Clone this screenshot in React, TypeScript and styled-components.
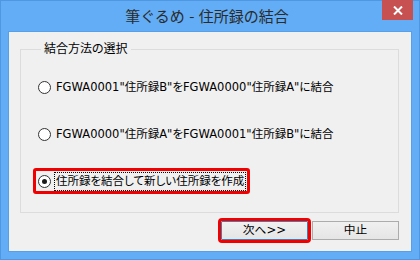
import React, { useState } from 'react';
import styled, { createGlobalStyle, css } from 'styled-components';

// Meiryo UI stand-in: Verdana-like Latin from DejaVu, kana/kanji from Noto CJK
const uiFont = `'DejaVu Sans', 'Noto Sans CJK JP', sans-serif`;

const GlobalStyle = createGlobalStyle`
  html, body {
    margin: 0;
    padding: 0;
    background: #62adf5;
  }
  body {
    font-family: ${uiFont};
    font-feature-settings: 'palt';
  }
`;

const options = [
  { id: 'b-to-a', label: 'FGWA0001"住所録B"をFGWA0000"住所録A"に結合' },
  { id: 'a-to-b', label: 'FGWA0000"住所録A"をFGWA0001"住所録B"に結合' },
  { id: 'new', label: '住所録を結合して新しい住所録を作成' },
];

const App: React.FC = () => {
  const [selected, setSelected] = useState('new');

  return (
    <>
      <GlobalStyle />
      <Window>
        <TitleBar>
          <span />
          <Title>筆ぐるめ - 住所録の結合</Title>
          <CloseButton aria-label="閉じる">
            <svg width="10" height="9" viewBox="0 0 10 9">
              <path d="M1 0.5 L9 8.5 M9 0.5 L1 8.5" stroke="#fff" strokeWidth="2" />
            </svg>
          </CloseButton>
        </TitleBar>
        <Client>
          <GroupBox>
            <Legend>結合方法の選択</Legend>
            <OptionList>
              {options.map((opt) => (
                <OptionRow
                  key={opt.id}
                  $highlighted={opt.id === 'new'}
                  onClick={() => setSelected(opt.id)}
                >
                  <RadioCircle $checked={selected === opt.id} />
                  <OptionText $focused={selected === opt.id}>{opt.label}</OptionText>
                </OptionRow>
              ))}
            </OptionList>
          </GroupBox>
          <ButtonRow>
            <DialogButton $primary $highlighted>次へ&gt;&gt;</DialogButton>
            <DialogButton>中止</DialogButton>
          </ButtonRow>
        </Client>
      </Window>
    </>
  );
};

const Window = styled.div`
  width: 420px;
  height: 260px;
  box-sizing: border-box;
  border: 1px solid #4f97e0;
  background: #62adf5;
  display: flex;
  flex-direction: column;
`;

const TitleBar = styled.div`
  height: 30px;
  display: grid;
  grid-template-columns: 1fr max-content 1fr;
  align-items: start;
  padding-right: 6px;
`;

const Title = styled.div`
  font-family: 'Noto Sans CJK JP', sans-serif;
  font-feature-settings: normal;
  font-size: 15px;
  line-height: 30px;
  color: #2b2b2b;
  white-space: nowrap;
  word-spacing: 1px;
`;

const CloseButton = styled.button`
  justify-self: end;
  width: 31px;
  height: 20px;
  margin-top: -1px;
  border: none;
  padding: 0;
  background: #c75050;
  display: flex;
  align-items: center;
  justify-content: center;
`;

const Client = styled.div`
  flex: 1;
  margin: 0 7px 7px 7px;
  border: 1px solid #56a0ea;
  background: #f0f0f0;
  display: flex;
  flex-direction: column;
  padding: 10px 12px 0 11px;
`;

const GroupBox = styled.fieldset`
  margin: 0;
  padding: 18px 0 0 15px;
  height: 171px;
  box-sizing: border-box;
  border: 1px solid #dcdcdc;
  border-radius: 0;
`;

const Legend = styled.legend`
  padding: 0 3px;
  margin-left: 5px;
  font-size: 12px;
  line-height: 14px;
  color: #000;
`;

const OptionList = styled.div`
  display: flex;
  flex-direction: column;
  gap: 21px;
`;

const OptionRow = styled.div<{ $highlighted?: boolean }>`
  display: flex;
  align-items: center;
  gap: 4px;
  height: 26px;
  box-sizing: border-box;
  padding-left: 2px;
  width: fit-content;
  border: 3px solid transparent;
  border-radius: 3px;
  margin-left: -3px;
  cursor: default;
  ${({ $highlighted }) =>
    $highlighted &&
    css`
      border-color: #f00000;
      padding-right: 2px;
    `}
`;

const RadioCircle = styled.span<{ $checked: boolean }>`
  width: 13px;
  height: 13px;
  box-sizing: border-box;
  border-radius: 50%;
  border: 1px solid #333;
  background: #fff;
  display: flex;
  align-items: center;
  justify-content: center;
  flex-shrink: 0;
  &::after {
    content: '';
    width: 5px;
    height: 5px;
    border-radius: 50%;
    background: ${({ $checked }) => ($checked ? '#1a1a1a' : 'transparent')};
  }
`;

const OptionText = styled.span<{ $focused: boolean }>`
  font-size: 11.5px;
  line-height: 17px;
  color: #000;
  white-space: nowrap;
  padding: 0 1px;
  outline: ${({ $focused }) => ($focused ? '1px dotted #000' : 'none')};
`;

const ButtonRow = styled.div`
  display: flex;
  justify-content: flex-end;
  gap: 4px;
  margin-top: 8px;
`;

const DialogButton = styled.button<{ $primary?: boolean; $highlighted?: boolean }>`
  width: 87px;
  height: 19px;
  box-sizing: border-box;
  padding: 0;
  font-family: ${uiFont};
  font-feature-settings: 'palt';
  font-size: 11.75px;
  line-height: 17px;
  color: #000;
  background: linear-gradient(#f0f0f0, #e5e5e5);
  border: 1px solid ${({ $primary }) => ($primary ? '#3c7fb1' : '#acacac')};
  ${({ $highlighted }) =>
    $highlighted &&
    css`
      outline: 3px solid #f00000;
      outline-offset: 0;
      border-radius: 1px;
    `}
`;

export default App;
